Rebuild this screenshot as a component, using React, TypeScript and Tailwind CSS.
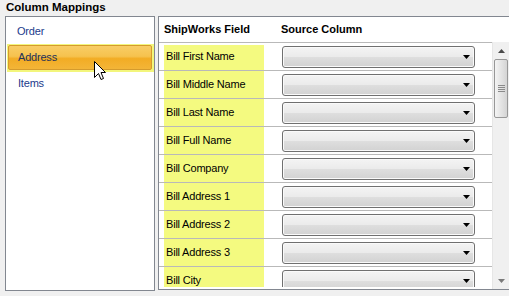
import React from "react";

const FIELDS = [
  "Bill First Name",
  "Bill Middle Name",
  "Bill Last Name",
  "Bill Full Name",
  "Bill Company",
  "Bill Address 1",
  "Bill Address 2",
  "Bill Address 3",
  "Bill City",
];

const FONT = { fontFamily: '"Liberation Sans", Arial, sans-serif' };

function Cursor() {
  return (
    <svg width="12" height="19" viewBox="0 0 12 19" className="absolute left-[87px] top-[17px]">
      <path
        d="M0.5 0.5 L0.5 16.5 L4.5 12.5 L7 18.5 L9.5 17.5 L7 11.5 L11.5 11.5 Z"
        fill="#fff"
        stroke="#000"
        strokeWidth="1"
        strokeLinejoin="miter"
      />
    </svg>
  );
}

function ComboBox() {
  return (
    <div className="mt-[3px] ml-[18px] flex h-[22px] w-[193px] items-center justify-end rounded-[3px] border border-[#707070] bg-[linear-gradient(to_bottom,#f4f4f4_0%,#ebebeb_48%,#dedede_52%,#d2d2d2_100%)] pr-[4px] shadow-[inset_0_0_0_1px_#fafafa]">
      <svg width="7" height="4" viewBox="0 0 7 4">
        <path d="M0 0 H7 L3.5 4 Z" fill="#000" />
      </svg>
    </div>
  );
}

function ScrollArrow({ up }: { up?: boolean }) {
  return (
    <div className="flex h-[17px] items-center justify-center">
      <svg width="7" height="4" viewBox="0 0 7 4">
        <path d={up ? "M0 4 H7 L3.5 0 Z" : "M0 0 H7 L3.5 4 Z"} fill={up ? "#4a4a4a" : "#7a7a7a"} />
      </svg>
    </div>
  );
}

function ScrollBar() {
  return (
    <div className="flex w-[17px] flex-col bg-[#f0f0f0] border-l border-[#e6e6e6]">
      <ScrollArrow up />
      <div className="mx-[1px] flex h-[59px] flex-col items-center justify-center gap-[1px] rounded-[2px] border border-[#979797] bg-[linear-gradient(to_right,#f4f4f4,#e4e4e4_50%,#d4d4d4)]">
        <div className="h-px w-[7px] bg-[#8a8a8a]" />
        <div className="h-px w-[7px] bg-[#8a8a8a]" />
        <div className="h-px w-[7px] bg-[#8a8a8a]" />
        <div className="h-px w-[7px] bg-[#8a8a8a]" />
      </div>
      <div className="flex-1" />
      <ScrollArrow />
    </div>
  );
}

export default function App() {
  return (
    <div className="h-[296px] w-[509px] overflow-hidden bg-[#f0f0f0] text-[11px] text-black" style={FONT}>
      <div className="h-[16px] pl-[6px] pt-px text-[11.5px] font-bold leading-[12px]">Column Mappings</div>

      <div className="flex items-start gap-[3px] pl-[5px]">
        {/* left list */}
        <div className="h-[275px] w-[150px] flex-none border border-[#828790] bg-white pt-[2px] tracking-[-0.2px]">
          <div className="flex h-[25px] items-center pl-[11px] text-[#1c3a8c]">Order</div>
          <div className="relative ml-[1px] bg-[#f3f67c] pb-[2px] pl-px pr-[2px] pt-px">
            <div className="flex h-[25px] items-center rounded-[2px] border border-[#d59b2c] bg-[linear-gradient(to_bottom,#f8cd66_0%,#f6c24e_45%,#f2ac24_55%,#f3b538_100%)] pl-[9px] text-[#23325a]">
              Address
            </div>
            <Cursor />
          </div>
          <div className="flex h-[23px] items-center pl-[12px] text-[#1c3a8c]">Items</div>
        </div>

        {/* mapping grid */}
        <div className="flex h-[274px] w-[352px] flex-none border border-[#828790] bg-white">
          <div className="flex w-[333px] flex-col">
            <div className="flex h-[26px] flex-none items-center border-b border-[#b9b9b9] font-bold">
              <div className="w-[122px] pl-[5px]">ShipWorks Field</div>
              <div>Source Column</div>
            </div>
            <div className="h-[244px] overflow-hidden">
              {FIELDS.map((f, i) => (
                <div key={f} className="flex h-[28px] items-start border-b border-[#b9b9b9]">
                  <div
                    className={`ml-[5px] flex w-[100px] items-center bg-[#f4fa80] pl-[2px] tracking-[-0.2px] ${
                      i === 0 ? "mt-[2px] h-[25px] pb-[2px]" : "h-[27px]"
                    }`}
                  >
                    {f}
                  </div>
                  <ComboBox />
                </div>
              ))}
            </div>
            <div className="h-[2px]" />
          </div>
          <div className="flex flex-col">
            <div className="h-[25px] bg-white" />
            <div className="flex flex-1">
              <ScrollBar />
            </div>
          </div>
        </div>
      </div>
    </div>
  );
}
